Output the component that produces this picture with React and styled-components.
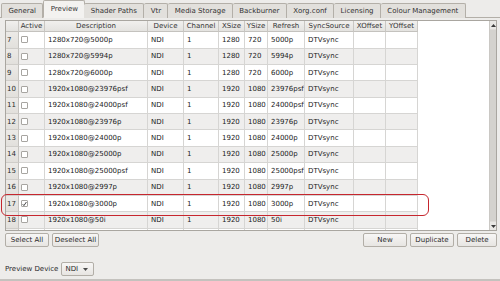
import React from 'react'
import styled, { createGlobalStyle } from 'styled-components'

const GlobalStyle = createGlobalStyle`
  html, body {
    margin: 0;
    padding: 0;
    background: #edecea;
  }
  * { box-sizing: border-box; }
`;

const Window = styled.div`
  width: 500px;
  height: 281px;
  display: flex;
  flex-direction: column;
  background: #edecea;
  font-family: "DejaVu Sans", "Liberation Sans", sans-serif;
  font-size: 7px;
  color: #2b2b2b;
  border-bottom: 2px solid #c4c2be;
  overflow: hidden;
`;

const TabBar = styled.div`
  display: flex;
  align-items: flex-end;
  height: 18px;
  padding-left: 1px;
  position: relative;
  z-index: 1;
`;

const Tab = styled.div`
  height: ${({ $active }) => ($active ? '18px' : '15px')};
  padding: 0 6.4px;
  display: flex;
  align-items: center;
  justify-content: center;
  border: 1px solid #b3afa8;
  border-bottom: ${({ $active }) => ($active ? '1px solid #f3f2f0' : 'none')};
  border-left: ${({ $first, $active }) => ($first || $active ? '1px solid #b3afa8' : 'none')};
  border-radius: 2px 2px 0 0;
  background: ${({ $active }) => ($active ? '#f3f2f0' : '#e2e0dc')};
  color: #333333;
  white-space: nowrap;
  margin-right: ${({ $active }) => ($active ? '-1px' : '0')};
`;

const Panel = styled.div`
  flex: 1;
  display: flex;
  flex-direction: column;
  border-top: 1px solid #b3afa8;
  margin-top: -1px;
  padding: 2px 3px 0 5px;
`;

const TableWrap = styled.div`
  position: relative;
`;

const TableFrame = styled.div`
  height: 211px;
  display: flex;
  border: 1px solid #a9a6a0;
  background: #ffffff;
  overflow: hidden;
`;

const Viewport = styled.div`
  flex: 1;
  overflow: hidden;
`;

const cols = '13px 26px 103px 36px 35px 26px 23px 37px 49px 32px 32px';

const HeaderRow = styled.div`
  display: grid;
  grid-template-columns: ${cols};
  height: 11.3px;
  width: max-content;
`;

const HeaderCell = styled.div`
  background: linear-gradient(#f1f0ee, #e4e3e0);
  border-right: 1px solid #c9c7c3;
  border-bottom: 1px solid #c4c2be;
  display: flex;
  align-items: center;
  justify-content: center;
  color: #333333;
  white-space: nowrap;
  overflow: hidden;
`;

const Row = styled.div`
  display: grid;
  grid-template-columns: ${cols};
  height: 16.36px;
  width: max-content;
  background: ${({ $alt }) => ($alt ? '#efeeed' : '#ffffff')};
`;

const NumCell = styled.div`
  background: linear-gradient(#eceae7, #e2e0dc);
  border-right: 1px solid #c4c2be;
  border-bottom: 1px solid #cfcdc9;
  display: flex;
  align-items: center;
  padding-left: 1px;
  color: #2a2a2a;
`;

const Cell = styled.div`
  border-right: 1px solid #d6d5d3;
  border-bottom: 1px solid #d6d5d3;
  display: flex;
  align-items: center;
  padding-left: 3px;
  white-space: nowrap;
  overflow: hidden;
  color: #222222;
`;

const CheckBox = styled.span`
  width: 7px;
  height: 7px;
  margin-left: -1px;
  border: 1px solid #a7a5a1;
  border-radius: 1px;
  background: #ffffff;
  display: flex;
  align-items: center;
  justify-content: center;
`;

const Scrollbar = styled.div`
  width: 7px;
  display: flex;
  flex-direction: column;
  background: #dedcd8;
  border-left: 1px solid #cac8c4;
`;

const ScrollArrow = styled.div`
  height: 8px;
  display: flex;
  align-items: center;
  justify-content: center;
  background: #e9e8e5;
`;

const ScrollTrack = styled.div`
  flex: 1;
  padding: 1px 0;
`;

const ScrollHandle = styled.div`
  height: 100%;
  background: #d4d2ce;
`;

const Highlight = styled.div`
  position: absolute;
  left: -4px;
  top: 174px;
  width: 428px;
  height: 22px;
  border: 1.5px solid #c6262e;
  border-radius: 6px;
  pointer-events: none;
`;

const ButtonRow = styled.div`
  display: flex;
  justify-content: space-between;
  margin-top: 2px;
`;

const ButtonGroup = styled.div`
  display: flex;
  gap: 3px;
`;

const Button = styled.div`
  width: ${({ $w }) => $w}px;
  height: 14px;
  display: flex;
  align-items: center;
  justify-content: center;
  border: 1px solid #b2aea7;
  border-radius: 2px;
  background: linear-gradient(#f7f6f5, #e7e5e2);
  color: #2a2a2a;
  white-space: nowrap;
`;

const DeviceRow = styled.div`
  display: flex;
  align-items: center;
  gap: 3px;
  margin-top: 15px;
`;

const Label = styled.span`
  color: #2a2a2a;
`;

const Select = styled.div`
  width: 33px;
  height: 14px;
  display: flex;
  align-items: center;
  justify-content: space-between;
  padding: 0 5px 0 3px;
  border: 1px solid #b2aea7;
  border-radius: 2px;
  background: linear-gradient(#f7f6f5, #e7e5e2);
`;

const headers = ['', 'Active', 'Description', 'Device', 'Channel', 'XSize', 'YSize', 'Refresh', 'SyncSource', 'XOffset', 'YOffset']

const rows = [
  [7, '1280x720@5000p', '1280', '720', '5000p'],
  [8, '1280x720@5994p', '1280', '720', '5994p'],
  [9, '1280x720@6000p', '1280', '720', '6000p'],
  [10, '1920x1080@23976psf', '1920', '1080', '23976psf'],
  [11, '1920x1080@24000psf', '1920', '1080', '24000psf'],
  [12, '1920x1080@23976p', '1920', '1080', '23976p'],
  [13, '1920x1080@24000p', '1920', '1080', '24000p'],
  [14, '1920x1080@25000p', '1920', '1080', '25000p'],
  [15, '1920x1080@25000psf', '1920', '1080', '25000psf'],
  [16, '1920x1080@2997p', '1920', '1080', '2997p'],
  [17, '1920x1080@3000p', '1920', '1080', '3000p'],
  [18, '1920x1080@50i', '1920', '1080', '50i'],
]

const tabs = ['General', 'Preview', 'Shader Paths', 'Vtr', 'Media Storage', 'Backburner', 'Xorg.conf', 'Licensing', 'Colour Management']

const App = () => {
  return (
    <>
      <GlobalStyle />
      <Window>
        <TabBar>
          {tabs.map((t, i) => (
            <Tab key={t} $active={t === 'Preview'} $first={i === 0}>{t}</Tab>
          ))}
        </TabBar>
        <Panel>
          <TableWrap>
            <TableFrame>
              <Viewport>
                <HeaderRow>
                  {headers.map((h, i) => <HeaderCell key={i}>{h}</HeaderCell>)}
                </HeaderRow>
                {rows.map(([n, desc, xs, ys, refresh], idx) => (
                  <Row key={n} $alt={idx % 2 === 1}>
                    <NumCell>{n}</NumCell>
                    <Cell>
                      <CheckBox>
                        {n === 17 && (
                          <svg width="6" height="6" viewBox="0 0 6 6">
                            <path d="M0.8 3.2 L2.3 4.9 L5.3 0.6" fill="none" stroke="#222" strokeWidth="1" />
                          </svg>
                        )}
                      </CheckBox>
                    </Cell>
                    <Cell>{desc}</Cell>
                    <Cell>NDI</Cell>
                    <Cell>1</Cell>
                    <Cell>{xs}</Cell>
                    <Cell>{ys}</Cell>
                    <Cell>{refresh}</Cell>
                    <Cell>DTVsync</Cell>
                    <Cell />
                    <Cell />
                  </Row>
                ))}
                {/* next row, scrolled mostly out of view */}
                <Row>
                  <NumCell />
                  <Cell />
                  <Cell />
                  <Cell />
                  <Cell />
                  <Cell />
                  <Cell />
                  <Cell />
                  <Cell />
                  <Cell />
                  <Cell />
                </Row>
              </Viewport>
              <Scrollbar>
                <ScrollArrow>
                  <svg width="5" height="3" viewBox="0 0 5 3"><path d="M0 3 L2.5 0 L5 3 Z" fill="#3a3a3a" /></svg>
                </ScrollArrow>
                <ScrollTrack>
                  <ScrollHandle />
                </ScrollTrack>
                <ScrollArrow>
                  <svg width="5" height="3" viewBox="0 0 5 3"><path d="M0 0 L5 0 L2.5 3 Z" fill="#3a3a3a" /></svg>
                </ScrollArrow>
              </Scrollbar>
            </TableFrame>
            <Highlight />
          </TableWrap>
          <ButtonRow>
            <ButtonGroup>
              <Button $w={44}>Select All</Button>
              <Button $w={47}>Deselect All</Button>
            </ButtonGroup>
            <ButtonGroup>
              <Button $w={44}>New</Button>
              <Button $w={44}>Duplicate</Button>
              <Button $w={40}>Delete</Button>
            </ButtonGroup>
          </ButtonRow>
          <DeviceRow>
            <Label>Preview Device</Label>
            <Select>
              <span>NDI</span>
              <svg width="5" height="3" viewBox="0 0 5 3"><path d="M0 0 L5 0 L2.5 3 Z" fill="#4a4a4a" /></svg>
            </Select>
          </DeviceRow>
        </Panel>
      </Window>
    </>
  )
}

export default App
